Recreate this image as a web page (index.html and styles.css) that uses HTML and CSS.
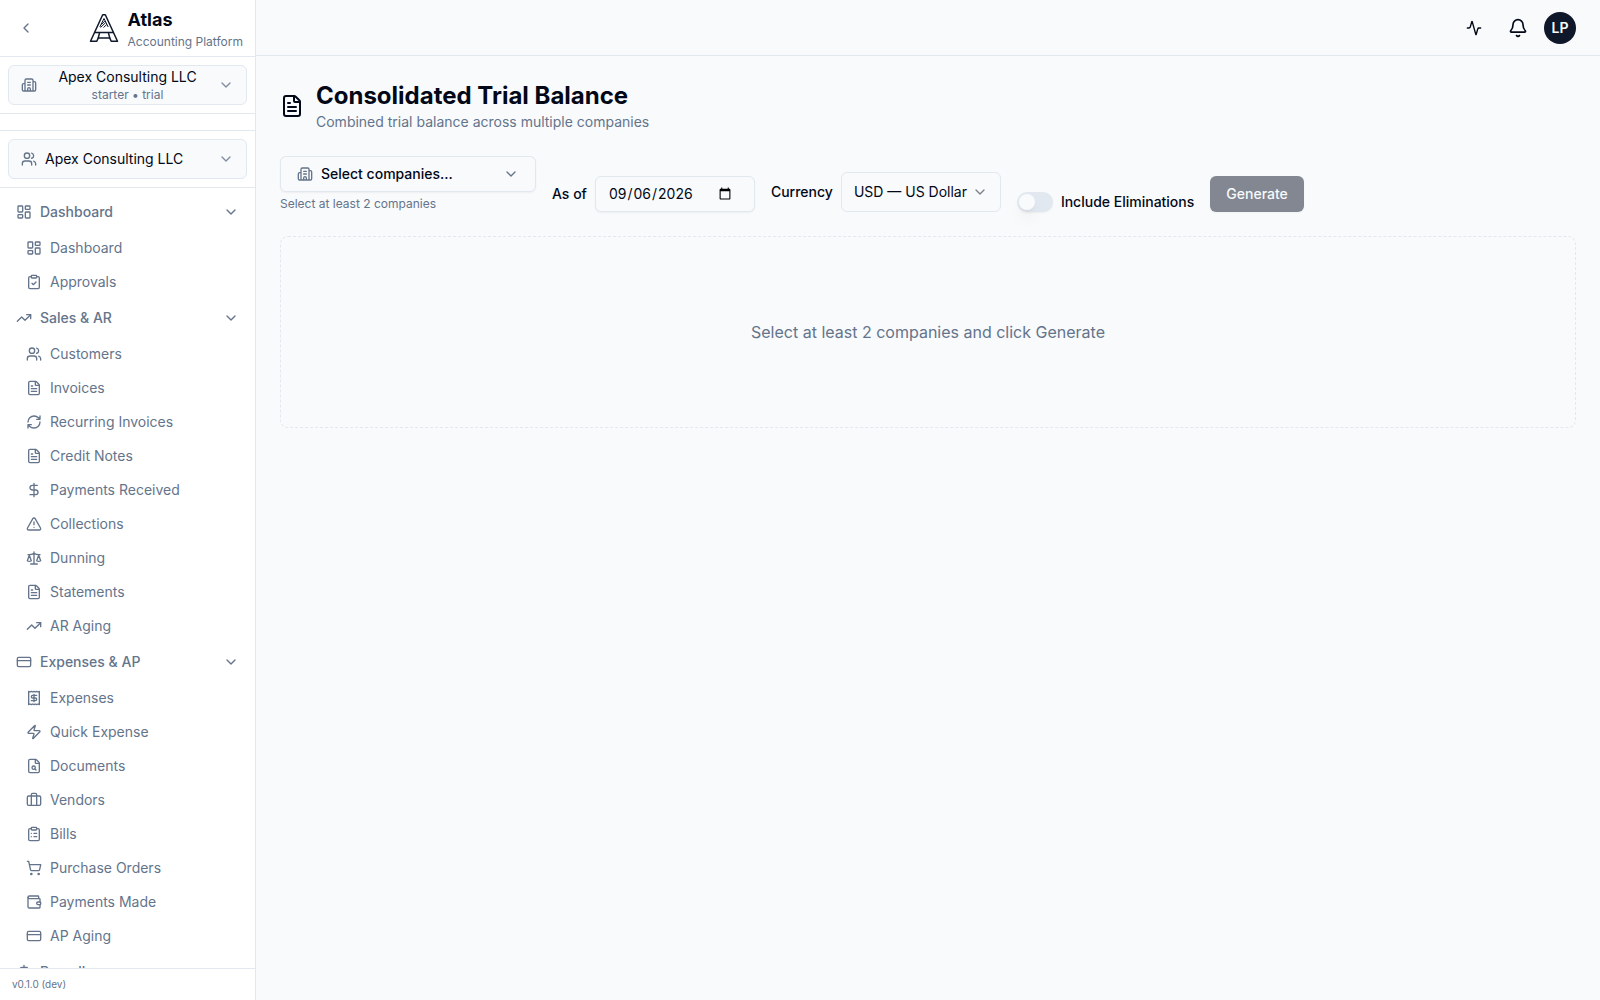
FILE: index.html
```html
<!DOCTYPE html>
<html lang="en">
<head>
<meta charset="utf-8">
<meta name="viewport" content="width=device-width, initial-scale=1">
<title>Consolidated Trial Balance – Atlas</title>
<link rel="stylesheet" href="styles.css">
</head>
<body>
<svg class="sprite" aria-hidden="true">
  <symbol id="chevron-left" viewBox="0 0 24 24"><path d="m15 18-6-6 6-6"/></symbol>
  <symbol id="chevron-down" viewBox="0 0 24 24"><path d="m6 9 6 6 6-6"/></symbol>
  <symbol id="building" viewBox="0 0 24 24"><path d="M10 12h4M10 8h4M14 21v-3a2 2 0 0 0-4 0v3M6 10H4a2 2 0 0 0-2 2v7a2 2 0 0 0 2 2h16a2 2 0 0 0 2-2V9a2 2 0 0 0-2-2h-2M6 21V5a2 2 0 0 1 2-2h8a2 2 0 0 1 2 2v16"/></symbol>
  <symbol id="users" viewBox="0 0 24 24"><path d="M16 21v-2a4 4 0 0 0-4-4H6a4 4 0 0 0-4 4v2M16 3.128a4 4 0 0 1 0 7.744M22 21v-2a4 4 0 0 0-3-3.87"/><circle cx="9" cy="7" r="4"/></symbol>
  <symbol id="dashboard" viewBox="0 0 24 24"><rect width="7" height="9" x="3" y="3" rx="1"/><rect width="7" height="5" x="14" y="3" rx="1"/><rect width="7" height="9" x="14" y="12" rx="1"/><rect width="7" height="5" x="3" y="16" rx="1"/></symbol>
  <symbol id="clipboard-check" viewBox="0 0 24 24"><rect width="8" height="4" x="8" y="2" rx="1"/><path d="M16 4h2a2 2 0 0 1 2 2v14a2 2 0 0 1-2 2H6a2 2 0 0 1-2-2V6a2 2 0 0 1 2-2h2M9 14l2 2 4-4"/></symbol>
  <symbol id="clipboard-list" viewBox="0 0 24 24"><rect width="8" height="4" x="8" y="2" rx="1"/><path d="M16 4h2a2 2 0 0 1 2 2v14a2 2 0 0 1-2 2H6a2 2 0 0 1-2-2V6a2 2 0 0 1 2-2h2M12 11h4M12 16h4M8 11h.01M8 16h.01"/></symbol>
  <symbol id="trending-up" viewBox="0 0 24 24"><path d="M16 7h6v6"/><path d="m22 7-8.500 8.500-5-5L2 17"/></symbol>
  <symbol id="file-text" viewBox="0 0 24 24"><path d="M6 22a2 2 0 0 1-2-2V4a2 2 0 0 1 2-2h8a2.400 2.400 0 0 1 1.704.706l3.588 3.588A2.400 2.400 0 0 1 20 8v12a2 2 0 0 1-2 2z"/><path d="M14 2v5a1 1 0 0 0 1 1h5M10 9H8M16 13H8M16 17H8"/></symbol>
  <symbol id="file-search" viewBox="0 0 24 24"><path d="M6 22a2 2 0 0 1-2-2V4a2 2 0 0 1 2-2h8a2.400 2.400 0 0 1 1.704.706l3.588 3.588A2.400 2.400 0 0 1 20 8v12a2 2 0 0 1-2 2z"/><path d="M14 2v5a1 1 0 0 0 1 1h5M13.300 16.300 15 18"/><circle cx="11.500" cy="14.500" r="2.500"/></symbol>
  <symbol id="refresh" viewBox="0 0 24 24"><path d="M3 12a9 9 0 0 1 9-9 9.750 9.750 0 0 1 6.740 2.740L21 8M21 3v5h-5M21 12a9 9 0 0 1-9 9 9.750 9.750 0 0 1-6.740-2.740L3 16M8 16H3v5"/></symbol>
  <symbol id="dollar" viewBox="0 0 24 24"><path d="M12 2v20M17 5H9.500a3.500 3.500 0 0 0 0 7h5a3.500 3.500 0 0 1 0 7H6"/></symbol>
  <symbol id="alert" viewBox="0 0 24 24"><path d="m21.730 18-8-14a2 2 0 0 0-3.480 0l-8 14A2 2 0 0 0 4 21h16a2 2 0 0 0 1.730-3M12 9v4M12 17h.01"/></symbol>
  <symbol id="scale" viewBox="0 0 24 24"><path d="m16 16 3-8 3 8c-.87.65-1.920 1-3 1s-2.130-.35-3-1M2 16l3-8 3 8c-.87.65-1.920 1-3 1s-2.130-.35-3-1M7 21h10M12 3v18M3 7h2c2 0 5-1 7-2 2 1 5 2 7 2h2"/></symbol>
  <symbol id="credit-card" viewBox="0 0 24 24"><rect width="20" height="14" x="2" y="5" rx="2"/><path d="M2 10h20"/></symbol>
  <symbol id="receipt" viewBox="0 0 24 24"><path d="M4 2v20l2-1 2 1 2-1 2 1 2-1 2 1 2-1 2 1V2l-2 1-2-1-2 1-2-1-2 1-2-1-2 1Z"/><path d="M16 8h-6a2 2 0 1 0 0 4h4a2 2 0 1 1 0 4H8M12 17.500v-11"/></symbol>
  <symbol id="zap" viewBox="0 0 24 24"><path d="M4 14a1 1 0 0 1-.78-1.630l9.900-10.200a.5.5 0 0 1 .86.46l-1.920 6.020A1 1 0 0 0 13 10h7a1 1 0 0 1 .78 1.630l-9.900 10.200a.5.5 0 0 1-.86-.46l1.920-6.020A1 1 0 0 0 11 14z"/></symbol>
  <symbol id="luggage" viewBox="0 0 24 24"><path d="M16 20V4a2 2 0 0 0-2-2h-4a2 2 0 0 0-2 2v16"/><rect width="20" height="14" x="2" y="6" rx="2"/></symbol>
  <symbol id="cart" viewBox="0 0 24 24"><circle cx="8" cy="21" r="1"/><circle cx="19" cy="21" r="1"/><path d="M2.050 2.050h2l2.660 12.420a2 2 0 0 0 2 1.580h9.780a2 2 0 0 0 1.950-1.570l1.650-7.430H5.120"/></symbol>
  <symbol id="wallet" viewBox="0 0 24 24"><path d="M19 7V4a1 1 0 0 0-1-1H5a2 2 0 0 0 0 4h15a1 1 0 0 1 1 1v4h-3a2 2 0 0 0 0 4h3a1 1 0 0 0 1-1v-2a1 1 0 0 0-1-1"/><path d="M3 5v14a2 2 0 0 0 2 2h15a1 1 0 0 0 1-1v-4"/></symbol>
  <symbol id="activity" viewBox="0 0 24 24"><path d="M22 12h-2.480a2 2 0 0 0-1.930 1.460l-2.350 8.360a.25.25 0 0 1-.48 0L9.240 2.180a.25.25 0 0 0-.48 0l-2.350 8.360A2 2 0 0 1 4.490 12H2"/></symbol>
  <symbol id="bell" viewBox="0 0 24 24"><path d="M10.268 21a2 2 0 0 0 3.464 0M3.262 15.326A1 1 0 0 0 4 17h16a1 1 0 0 0 .74-1.673C19.410 13.956 18 12.499 18 8A6 6 0 0 0 6 8c0 4.499-1.411 5.956-2.738 7.326"/></symbol>
</svg>

<div class="app">
  <aside class="sidebar">
    <div class="brand">
      <button class="collapse" type="button" aria-label="Collapse sidebar"><svg class="icon"><use href="#chevron-left"/></svg></button>
      <div class="brand-mark">
        <svg class="logo" viewBox="0 0 32 32" aria-hidden="true">
          <path d="M14.700 2.800h2.600L29.500 29.300h-6.300l-1.400-3.200H10.200l-1.400 3.200H2.500Z"/>
          <path d="M6.500 20.600h19M11.600 20.600l-1.400 5.500M20.400 20.600l1.400 5.500"/>
          <path class="hatch" d="M16 6.500 11.800 15M16 6.500 20.200 15M13.500 12.500l3.300-3.500M12.500 15.500l5.300-5M15.500 15.500l3.300-3"/>
        </svg>
        <div>
          <div class="brand-name">Atlas</div>
          <div class="brand-sub">Accounting Platform</div>
        </div>
      </div>
    </div>
    <div class="switcher">
      <button class="switcher-button" type="button">
        <svg class="icon"><use href="#building"/></svg>
        <span class="switcher-text centered"><span class="switcher-name">Apex Consulting LLC</span><span class="switcher-plan">starter • trial</span></span>
        <svg class="icon faint"><use href="#chevron-down"/></svg>
      </button>
    </div>
    <div class="switcher"></div>
    <div class="switcher">
      <button class="switcher-button" type="button">
        <svg class="icon"><use href="#users"/></svg>
        <span class="switcher-text"><span class="switcher-name">Apex Consulting LLC</span></span>
        <svg class="icon faint"><use href="#chevron-down"/></svg>
      </button>
    </div>
    <nav class="nav" aria-label="Main">
      <section class="group">
        <button class="group-head" type="button"><svg class="icon"><use href="#dashboard"/></svg><span>Dashboard</span><svg class="icon"><use href="#chevron-down"/></svg></button>
        <div class="links">
          <a href="#"><svg class="icon"><use href="#dashboard"/></svg>Dashboard</a>
          <a href="#"><svg class="icon"><use href="#clipboard-check"/></svg>Approvals</a>
        </div>
      </section>
      <section class="group">
        <button class="group-head" type="button"><svg class="icon"><use href="#trending-up"/></svg><span>Sales &amp; AR</span><svg class="icon"><use href="#chevron-down"/></svg></button>
        <div class="links">
          <a href="#"><svg class="icon"><use href="#users"/></svg>Customers</a>
          <a href="#"><svg class="icon"><use href="#file-text"/></svg>Invoices</a>
          <a href="#"><svg class="icon"><use href="#refresh"/></svg>Recurring Invoices</a>
          <a href="#"><svg class="icon"><use href="#file-text"/></svg>Credit Notes</a>
          <a href="#"><svg class="icon"><use href="#dollar"/></svg>Payments Received</a>
          <a href="#"><svg class="icon"><use href="#alert"/></svg>Collections</a>
          <a href="#"><svg class="icon"><use href="#scale"/></svg>Dunning</a>
          <a href="#"><svg class="icon"><use href="#file-text"/></svg>Statements</a>
          <a href="#"><svg class="icon"><use href="#trending-up"/></svg>AR Aging</a>
        </div>
      </section>
      <section class="group">
        <button class="group-head" type="button"><svg class="icon"><use href="#credit-card"/></svg><span>Expenses &amp; AP</span><svg class="icon"><use href="#chevron-down"/></svg></button>
        <div class="links">
          <a href="#"><svg class="icon"><use href="#receipt"/></svg>Expenses</a>
          <a href="#"><svg class="icon"><use href="#zap"/></svg>Quick Expense</a>
          <a href="#"><svg class="icon"><use href="#file-search"/></svg>Documents</a>
          <a href="#"><svg class="icon"><use href="#luggage"/></svg>Vendors</a>
          <a href="#"><svg class="icon"><use href="#clipboard-list"/></svg>Bills</a>
          <a href="#"><svg class="icon"><use href="#cart"/></svg>Purchase Orders</a>
          <a href="#"><svg class="icon"><use href="#wallet"/></svg>Payments Made</a>
          <a href="#"><svg class="icon"><use href="#credit-card"/></svg>AP Aging</a>
        </div>
      </section>
      <section class="group">
        <button class="group-head" type="button"><svg class="icon"><use href="#dollar"/></svg><span>Payroll</span><svg class="icon"><use href="#chevron-down"/></svg></button>
      </section>
    </nav>
    <footer class="version">v0.1.0 (dev)</footer>
  </aside>

  <div class="page">
    <header class="topbar">
      <button class="icon-button" type="button" aria-label="Activity"><svg class="icon"><use href="#activity"/></svg></button>
      <button class="icon-button" type="button" aria-label="Notifications"><svg class="icon medium"><use href="#bell"/></svg></button>
      <button class="avatar" type="button">LP</button>
    </header>
    <main class="content">
      <div class="heading">
        <svg class="icon large"><use href="#file-text"/></svg>
        <div>
          <h1>Consolidated Trial Balance</h1>
          <p>Combined trial balance across multiple companies</p>
        </div>
      </div>
      <form class="filters">
        <div class="companies">
          <button class="companies-button" type="button">
            <svg class="icon"><use href="#building"/></svg><span>Select companies...</span><svg class="icon"><use href="#chevron-down"/></svg>
          </button>
          <p>Select at least 2 companies</p>
        </div>
        <div class="field">
          <label for="as-of">As of</label>
          <input class="date" id="as-of" type="date" value="2026-09-06">
        </div>
        <div class="field">
          <label for="currency">Currency</label>
          <div class="select">
            <select id="currency"><option>USD — US Dollar</option></select>
            <svg class="icon"><use href="#chevron-down"/></svg>
          </div>
        </div>
        <div class="field">
          <input class="toggle" id="eliminations" type="checkbox" role="switch">
          <label for="eliminations">Include Eliminations</label>
        </div>
        <button class="generate" type="submit" disabled>Generate</button>
      </form>
      <div class="empty">Select at least 2 companies and click Generate</div>
    </main>
  </div>
</div>
</body>
</html>
```
FILE: styles.css
```css
:root {
  --ink: #020817;
  --muted: #64748b;
  --line: #e2e8f0;
  --canvas: #f8fafc;
}

* { box-sizing: border-box; }

body {
  margin: 0;
  background: var(--canvas);
  color: var(--ink);
  font: 14px/20px Inter, "Liberation Sans", sans-serif;
}

h1, p { margin: 0; }

button, input, select {
  margin: 0;
  padding: 0;
  border: 0;
  background: none;
  color: inherit;
  font: inherit;
}

a { color: inherit; text-decoration: none; }

.sprite { display: none; }

.icon {
  flex: none;
  display: block;
  width: 16px;
  height: 16px;
  fill: none;
  stroke: currentColor;
  stroke-width: 2;
  stroke-linecap: round;
  stroke-linejoin: round;
}
.icon.medium { width: 20px; height: 20px; }
.icon.large { width: 24px; height: 24px; }
.icon.faint { opacity: 0.8; }

.app { display: flex; height: 100vh; }

/* Sidebar */
.sidebar {
  flex: none;
  display: flex;
  flex-direction: column;
  width: 256px;
  border-right: 1px solid var(--line);
  background: #fff;
}

.brand {
  flex: none;
  display: flex;
  align-items: center;
  justify-content: space-between;
  padding: 6px 12px;
  border-bottom: 1px solid var(--line);
}
.collapse {
  display: grid;
  place-items: center;
  width: 28px;
  height: 28px;
  color: var(--muted);
}
.brand-mark { display: flex; align-items: center; gap: 8px; }
.logo {
  width: 32px;
  height: 32px;
  fill: none;
  stroke: #0f172a;
  stroke-width: 1.5;
  stroke-linejoin: round;
}
.logo .hatch { stroke-width: 1; }
.brand-name { font-size: 18px; font-weight: 700; line-height: 28px; }
.brand-sub { color: var(--muted); font-size: 12px; line-height: 16px; }

.switcher {
  flex: none;
  padding: 8px;
  border-bottom: 1px solid var(--line);
}
.switcher-button {
  display: flex;
  align-items: center;
  gap: 8px;
  width: 100%;
  height: 40px;
  padding: 0 12px;
  border: 1px solid var(--line);
  border-radius: 6px;
  background: var(--canvas);
  text-align: left;
}
.switcher-button .icon { color: var(--muted); }
.switcher-text { flex: 1; display: flex; flex-direction: column; color: var(--ink); }
.switcher-text.centered { text-align: center; }
.switcher-plan { color: var(--muted); font-size: 12px; line-height: 16px; }

.nav {
  flex: 1;
  display: flex;
  flex-direction: column;
  gap: 4px;
  min-height: 0;
  padding: 8px;
  overflow-y: auto;
  scrollbar-width: none;
  color: var(--muted);
}
.group { flex: none; display: flex; flex-direction: column; gap: 4px; }
.group-head {
  display: flex;
  align-items: center;
  gap: 8px;
  height: 32px;
  padding: 0 8px;
  font-weight: 500;
  text-align: left;
}
.group-head span { flex: 1; }
.links { display: flex; flex-direction: column; gap: 2px; padding-left: 10px; }
.links a {
  display: flex;
  align-items: center;
  gap: 8px;
  height: 32px;
  padding: 0 8px;
}
.version {
  flex: none;
  padding: 8px 12px;
  border-top: 1px solid var(--line);
  color: var(--muted);
  font-size: 10px;
  line-height: 15px;
}

/* Page */
.page { flex: 1; min-width: 0; display: flex; flex-direction: column; }
.topbar {
  flex: none;
  display: flex;
  align-items: center;
  justify-content: flex-end;
  gap: 8px;
  height: 56px;
  padding: 0 24px;
  border-bottom: 1px solid var(--line);
}
.icon-button { display: grid; place-items: center; width: 36px; height: 36px; }
.avatar {
  width: 32px;
  height: 32px;
  border-radius: 50%;
  background: #0f172a;
  color: var(--canvas);
  font-weight: 600;
}

.content {
  flex: 1;
  display: flex;
  flex-direction: column;
  gap: 24px;
  min-height: 0;
  padding: 24px;
  overflow: auto;
}
.heading { display: flex; align-items: center; gap: 12px; }
.heading h1 { font-size: 24px; font-weight: 700; line-height: 32px; }
.heading p { color: var(--muted); }

.filters { display: flex; flex-wrap: wrap; align-items: flex-end; gap: 16px; }
.companies { display: flex; flex-direction: column; gap: 4px; width: 256px; }
.companies p { color: var(--muted); font-size: 12px; line-height: 16px; }
.companies-button,
.date {
  height: 36px;
  border: 1px solid var(--line);
  border-radius: 6px;
  background: var(--canvas);
  box-shadow: 0 1px 2px rgba(0, 0, 0, 0.05);
}
.companies-button {
  display: flex;
  align-items: center;
  gap: 8px;
  padding: 0 16px;
  font-weight: 500;
  text-align: left;
}
.companies-button span { flex: 1; }
.companies-button .icon { color: var(--muted); }

.field { display: flex; align-items: center; gap: 8px; }
.field label { font-weight: 500; }
.date { width: 160px; padding: 4px 20px 4px 12px; }

.select { display: grid; align-items: center; width: 160px; }
.select > * { grid-area: 1 / 1; }
.select select {
  width: 100%;
  height: 40px;
  padding: 0 32px 0 12px;
  border: 1px solid var(--line);
  border-radius: 6px;
  appearance: none;
}
.select .icon {
  justify-self: end;
  margin-right: 13px;
  opacity: 0.5;
  pointer-events: none;
}

.toggle {
  appearance: none;
  display: flex;
  width: 36px;
  height: 20px;
  padding: 2px;
  border-radius: 10px;
  background: var(--line);
  box-shadow: 0 1px 2px rgba(0, 0, 0, 0.05);
}
.toggle::before {
  content: "";
  width: 16px;
  height: 16px;
  border-radius: 50%;
  background: var(--canvas);
  box-shadow: 0 10px 15px -3px rgba(0, 0, 0, 0.1), 0 4px 6px -4px rgba(0, 0, 0, 0.1);
}
.toggle:checked { justify-content: flex-end; background: #0f172a; }

.generate {
  height: 36px;
  padding: 0 16px;
  border-radius: 6px;
  background: #0f172a;
  box-shadow: 0 1px 2px rgba(0, 0, 0, 0.05);
  color: var(--canvas);
  font-weight: 500;
}
.generate:disabled { opacity: 0.5; }

.empty {
  padding: 83px 24px;
  border: 1px dashed var(--line);
  border-radius: 8px;
  color: var(--muted);
  font-size: 16px;
  line-height: 24px;
  text-align: center;
}
```
